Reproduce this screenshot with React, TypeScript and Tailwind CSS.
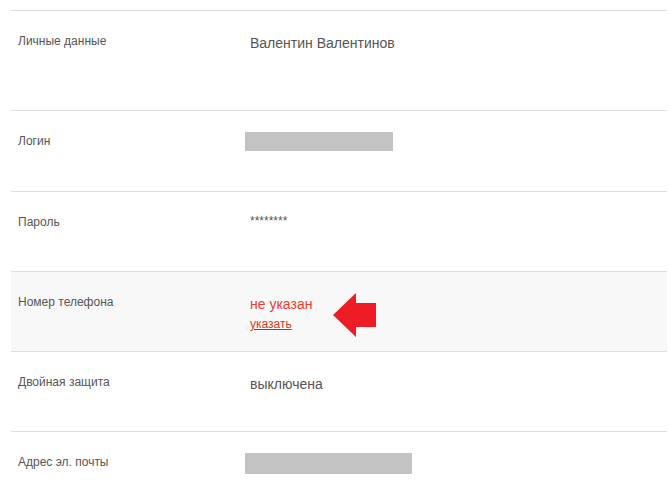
import React from "react";

function Row({
  label,
  children,
  h,
  bg,
}: {
  label: string;
  children: React.ReactNode;
  h: string;
  bg?: string;
}) {
  return (
    <div className={`flex border-t border-[#dedede] ${h} ${bg ?? ""}`}>
      <div className="w-[239px] shrink-0 pl-[7px] pt-[22px] text-[12px] leading-[16px] text-[#555]">
        {label}
      </div>
      <div className="pt-[21px]">{children}</div>
    </div>
  );
}

export default function App() {
  return (
    <div
      className="bg-white w-[670px] h-[501px] overflow-hidden pt-[10px] pl-[11px] pr-[3px]"
      style={{ fontFamily: '"Liberation Sans", Arial, sans-serif' }}
    >
      <Row label="Личные данные" h="h-[100px]">
        <div className="pt-[1px] text-[14px] leading-[20px] text-[#555]">Валентин Валентинов</div>
      </Row>
      <Row label="Логин" h="h-[81px]">
        <div className="-ml-[5px] w-[148px] h-[19px] bg-[#c3c3c3]" />
      </Row>
      <Row label="Пароль" h="h-[80px]">
        <div className="pt-[1px] text-[12px] leading-[14px] text-[#555]">********</div>
      </Row>
      <Row label="Номер телефона" h="h-[80px]" bg="bg-[#f8f8f8]">
        <div className="flex items-start">
          <div className="pt-[1px]">
            <div className="text-[14px] leading-[20px] text-[#f23b2c]">не указан</div>
            <a
              href="#"
              className="block mt-[2px] text-[12px] leading-[16px] text-[#d2401f] underline decoration-[#a8391c]"
            >
              указать
            </a>
          </div>
          <svg width="44" height="45" viewBox="0 0 44 45" className="ml-[21px]">
            <polygon points="0,22 23,0 23,10 43,10 43,34 23,34 23,44" fill="#ee1c25" />
          </svg>
        </div>
      </Row>
      <Row label="Двойная защита" h="h-[80px]">
        <div className="pt-[1px] text-[14px] leading-[20px] text-[#555]">выключена</div>
      </Row>
      <Row label="Адрес эл. почты" h="h-[80px]">
        <div className="-ml-[5px] w-[167px] h-[21px] bg-[#c3c3c3]" />
      </Row>
    </div>
  );
}
